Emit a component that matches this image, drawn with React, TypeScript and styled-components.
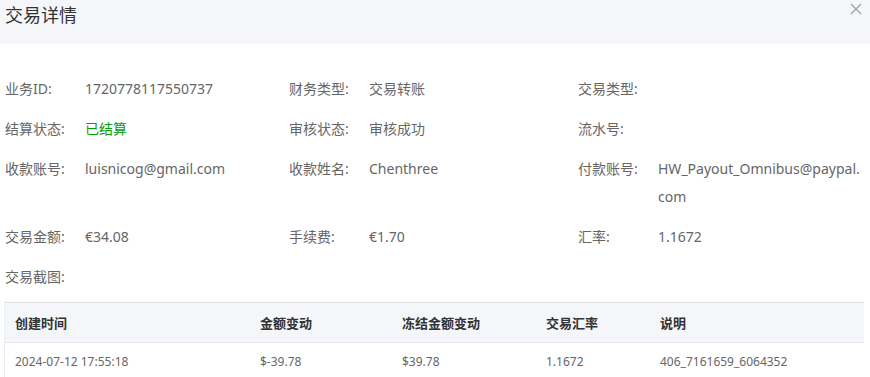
import React from "react";
import styled, { createGlobalStyle } from "styled-components";

const GlobalStyle = createGlobalStyle`
  html, body {
    margin: 0;
    padding: 0;
    background: #fff;
  }
  body {
    font-family: "Noto Sans", "Noto Sans CJK SC", sans-serif;
    overflow: hidden;
  }
`;

const Dialog = styled.div`
  width: 870px;
  height: 377px;
  display: flex;
  flex-direction: column;
  overflow: hidden;
`;

const Header = styled.header`
  height: 44px;
  flex: 0 0 44px;
  background: #f5f6fa;
  position: relative;
  padding: 3px 5px 0;
  box-sizing: border-box;
`;

const Title = styled.h1`
  margin: 0;
  font-size: 18px;
  font-weight: 400;
  line-height: 24px;
  color: #333;
`;

const Close = styled.button`
  position: absolute;
  top: 2px;
  right: 7px;
  width: 14px;
  height: 14px;
  padding: 0;
  border: 0;
  background: none;
  cursor: pointer;
  display: flex;
`;

const Body = styled.section`
  padding: 30px 6px 0 5px;
  display: flex;
  flex-direction: column;
`;

const InfoGrid = styled.div`
  display: grid;
  grid-template-columns: 284px 289px 1fr;
`;

const Field = styled.div<{ $full?: boolean }>`
  display: flex;
  align-items: flex-start;
  grid-column: ${(p) => (p.$full ? "1 / -1" : "auto")};
  padding: 1px 0 11px;
  font-size: 14px;
  line-height: 28px;
  color: #666;
`;

const Label = styled.span`
  flex: 0 0 80px;
  white-space: nowrap;
`;

const Value = styled.span<{ $tone?: "success" }>`
  flex: 1;
  min-width: 0;
  word-break: break-all;
  color: ${(p) => (p.$tone === "success" ? "#0a9a0a" : "#666")};
`;

const Table = styled.table`
  margin: 0 0 0 -1px;
  width: 860px;
  border-collapse: collapse;
  border-top: 1px solid #dfe1e6;
  border-left: 1px solid #ebeef5;
  font-size: 13px;
`;

const Th = styled.th`
  background: #f5f6fa;
  text-align: left;
  font-weight: 700;
  color: #333;
  height: 39px;
  padding: 0 10px;
  border-bottom: 1px solid #e6eaf2;
`;

const Td = styled.td`
  color: #666;
  font-size: 12px;
  height: 36px;
  padding: 0 10px;
`;

type Item = { label: string; value?: string; tone?: "success"; full?: boolean };

const items: Item[] = [
  { label: "业务ID:", value: "1720778117550737" },
  { label: "财务类型:", value: "交易转账" },
  { label: "交易类型:" },
  { label: "结算状态:", value: "已结算", tone: "success" },
  { label: "审核状态:", value: "审核成功" },
  { label: "流水号:" },
  { label: "收款账号:", value: "luisnicog@gmail.com" },
  { label: "收款姓名:", value: "Chenthree" },
  { label: "付款账号:", value: "HW_Payout_Omnibus@paypal.com" },
  { label: "交易金额:", value: "€34.08" },
  { label: "手续费:", value: "€1.70" },
  { label: "汇率:", value: "1.1672" },
  { label: "交易截图:", full: true },
];

const columns = [
  { title: "创建时间", width: 245 },
  { title: "金额变动", width: 142 },
  { title: "冻结金额变动", width: 144 },
  { title: "交易汇率", width: 114 },
  { title: "说明", width: undefined },
];

const rows = [["2024-07-12 17:55:18", "$-39.78", "$39.78", "1.1672", "406_7161659_6064352"]];

export default function App() {
  return (
    <Dialog>
      <GlobalStyle />
      <Header>
        <Title>交易详情</Title>
        <Close aria-label="关闭">
          <svg width="14" height="14" viewBox="0 0 14 14">
            <path d="M2 2L12 12M12 2L2 12" stroke="#9aa0a8" strokeWidth="1.2" fill="none" />
          </svg>
        </Close>
      </Header>
      <Body>
        <InfoGrid>
          {items.map((it) => (
            <Field key={it.label} $full={it.full}>
              <Label>{it.label}</Label>
              <Value $tone={it.tone}>{it.value}</Value>
            </Field>
          ))}
        </InfoGrid>
        <Table>
          <thead>
            <tr>
              {columns.map((c) => (
                <Th key={c.title} style={c.width ? { width: c.width - 20 } : undefined}>
                  {c.title}
                </Th>
              ))}
            </tr>
          </thead>
          <tbody>
            {rows.map((r) => (
              <tr key={r[0]}>
                {r.map((cell, i) => (
                  <Td key={i}>{cell}</Td>
                ))}
              </tr>
            ))}
          </tbody>
        </Table>
      </Body>
    </Dialog>
  );
}
